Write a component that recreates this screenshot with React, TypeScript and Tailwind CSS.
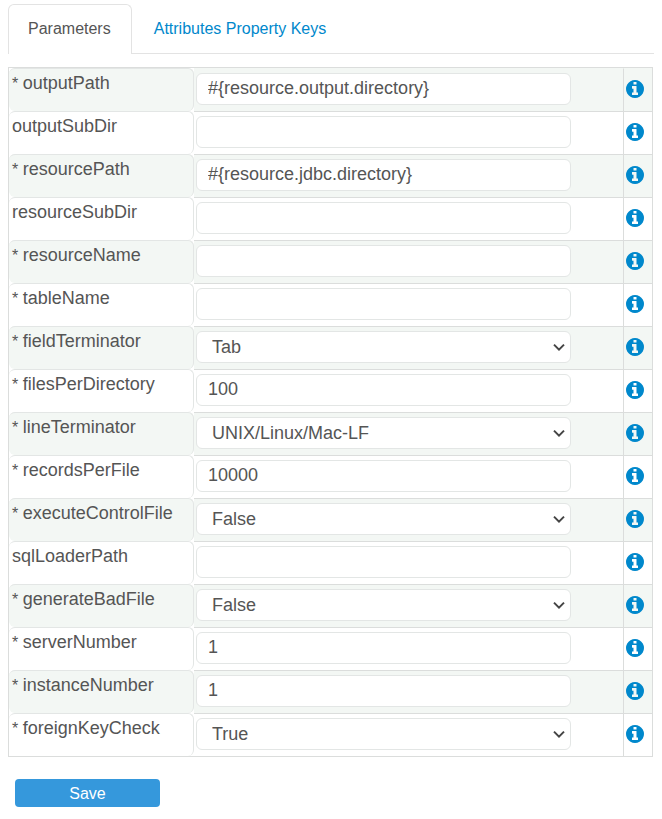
import { useState } from "react";
import clsx from "clsx";

type Field = {
  name: string;
  required?: boolean;
  value?: string;
  options?: string[];
};

const FIELDS: Field[] = [
  { name: "outputPath", required: true, value: "#{resource.output.directory}" },
  { name: "outputSubDir" },
  { name: "resourcePath", required: true, value: "#{resource.jdbc.directory}" },
  { name: "resourceSubDir" },
  { name: "resourceName", required: true },
  { name: "tableName", required: true },
  { name: "fieldTerminator", required: true, value: "Tab", options: ["Tab", "Comma", "Pipe"] },
  { name: "filesPerDirectory", required: true, value: "100" },
  {
    name: "lineTerminator",
    required: true,
    value: "UNIX/Linux/Mac-LF",
    options: ["UNIX/Linux/Mac-LF", "Windows-CRLF"],
  },
  { name: "recordsPerFile", required: true, value: "10000" },
  { name: "executeControlFile", required: true, value: "False", options: ["False", "True"] },
  { name: "sqlLoaderPath" },
  { name: "generateBadFile", required: true, value: "False", options: ["False", "True"] },
  { name: "serverNumber", required: true, value: "1" },
  { name: "instanceNumber", required: true, value: "1" },
  { name: "foreignKeyCheck", required: true, value: "True", options: ["True", "False"] },
];

const TABS = ["Parameters", "Attributes Property Keys"];

const control =
  "block h-8 w-full rounded-md border border-[#e3e6e5] bg-white text-lg leading-7 text-[#555] outline-none focus:border-[#0088cc]";

function InfoIcon() {
  return (
    <svg viewBox="0 0 1536 1536" className="h-[18px] w-[18px]" fill="currentColor" aria-hidden>
      <path d="M1024 1248v-160q0-14-9-23t-23-9h-96V544q0-14-9-23t-23-9H544q-14 0-23 9t-9 23v160q0 14 9 23t23 9h96v320h-96q-14 0-23 9t-9 23v160q0 14 9 23t23 9h448q14 0 23-9t9-23zM896 352V192q0-14-9-23t-23-9H672q-14 0-23 9t-9 23v160q0 14 9 23t23 9h192q14 0 23-9t9-23zM1536 768q0 209-103 385.500t-279.500 279.500t-385.500 103t-385.500-103t-279.500-279.500t-103-385.500t103-385.500t279.500-279.500t385.500-103t385.500 103t279.500 279.500t103 385.500z" />
    </svg>
  );
}

function SelectBox({ field }: { field: Field }) {
  return (
    <div className="relative">
      <select
        id={field.name}
        defaultValue={field.value}
        className={clsx(control, "appearance-none pl-[15px] pr-8")}
      >
        {field.options?.map((o) => (
          <option key={o}>{o}</option>
        ))}
      </select>
      <svg
        viewBox="0 0 12 8"
        className="pointer-events-none absolute right-1.5 top-3 h-2 w-3"
        fill="none"
        stroke="#444"
        strokeWidth="2"
        aria-hidden
      >
        <path d="M1 1.6 L6 6.6 L11 1.6" />
      </svg>
    </div>
  );
}

function FieldRow({ field, first }: { field: Field; first: boolean }) {
  // The first row sits right under the table border, so its cells draw no line.
  const line = first ? "border-t-transparent" : "border-t-[#dbdddc]";
  return (
    <tr className="h-[43px] odd:bg-[#f3f7f4]">
      <td className="w-[185px] rounded-md border-t border-r border-[#e3e6e5] p-0 pl-[3px] align-top">
        <label htmlFor={field.name} className="block text-lg leading-7">
          {field.required && <span className="text-base">* </span>}
          {field.name}
        </label>
      </td>
      <td className={clsx("border-t px-[2px] pt-1 pb-0 align-top", line)}>
        <div className="w-[375px] max-w-full">
          {field.options ? (
            <SelectBox field={field} />
          ) : (
            <input
              id={field.name}
              type="text"
              defaultValue={field.value}
              className={clsx(control, "px-[11px] pb-0.5")}
            />
          )}
        </div>
      </td>
      <td className={clsx("w-[29px] border-t border-l border-l-[#dbdddc] p-0 pt-[11px] pl-[2px] align-top", line)}>
        <button type="button" aria-label={`About ${field.name}`} className="block cursor-pointer text-[#0088cc]">
          <InfoIcon />
        </button>
      </td>
    </tr>
  );
}

export default function App() {
  const [tab, setTab] = useState(TABS[0]);

  return (
    <div className="bg-white px-2 pt-1 pb-3 font-['Liberation_Sans',Arial,sans-serif] text-[#555]">
      <div role="tablist" className="flex gap-0.5 border-b border-[#e3e3e3]">
        {TABS.map((t) => (
          <button
            key={t}
            type="button"
            role="tab"
            aria-selected={t === tab}
            onClick={() => setTab(t)}
            className={clsx(
              "-mb-px h-[50px] cursor-pointer rounded-t-md border border-b-0 pr-5 pb-0.5 pl-[19px] text-base",
              t === tab ? "border-[#e3e3e3] bg-white" : "border-transparent text-[#0088cc]"
            )}
          >
            {t}
          </button>
        ))}
      </div>

      <form onSubmit={(e) => e.preventDefault()} className="mt-[13px] mr-px">
        <table className="w-full border-separate border-spacing-0 border border-[#dbdddc]">
          <tbody>
            {FIELDS.map((f, i) => (
              <FieldRow key={f.name} field={f} first={i === 0} />
            ))}
          </tbody>
        </table>
        <button
          type="submit"
          className="mt-[22px] ml-[7px] h-7 w-[145px] cursor-pointer rounded bg-[#3598dc] pt-0.5 text-base text-white"
        >
          Save
        </button>
      </form>
    </div>
  );
}
